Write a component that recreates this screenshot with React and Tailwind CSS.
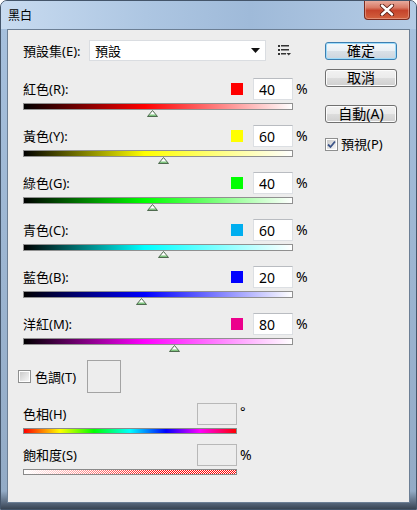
import React from 'react';

const channels = [
  { name: '紅色', key: 'R', value: 40, swatch: 'bg-[#ff0000]', bar: 'bg-[linear-gradient(to_right,#000,#f00_45%,#fff)]' },
  { name: '黃色', key: 'Y', value: 60, swatch: 'bg-[#ffff00]', bar: 'bg-[linear-gradient(to_right,#000,#ff0_45%,#fff)]' },
  { name: '綠色', key: 'G', value: 40, swatch: 'bg-[#00ff00]', bar: 'bg-[linear-gradient(to_right,#000,#0f0_45%,#fff)]' },
  { name: '青色', key: 'C', value: 60, swatch: 'bg-[#00aeef]', bar: 'bg-[linear-gradient(to_right,#000,#0ff_45%,#fff)]' },
  { name: '藍色', key: 'B', value: 20, swatch: 'bg-[#0000ff]', bar: 'bg-[linear-gradient(to_right,#000,#00f_45%,#fff)]' },
  { name: '洋紅', key: 'M', value: 80, swatch: 'bg-[#ec008c]', bar: 'bg-[linear-gradient(to_right,#000,#f0f_45%,#fff)]' },
];

function Thumb({ offset }) {
  return (
    <div className="h-[7px]">
      <svg width="11" height="7" viewBox="0 0 11 7" style={{ marginLeft: offset }} className="block">
        <defs>
          <linearGradient id="tg" x1="0" y1="0" x2="0" y2="1">
            <stop offset="0" stopColor="#ffffff" />
            <stop offset="0.5" stopColor="#ffffff" />
            <stop offset="1" stopColor="#3fa83f" />
          </linearGradient>
        </defs>
        <polygon points="5.5,0.5 10.5,6.5 0.5,6.5" fill="url(#tg)" stroke="#4f6a4f" strokeWidth="1" />
      </svg>
    </div>
  );
}

function ChannelRow({ c }) {
  // range is -200..300 across the 268px inner track
  const offset = 1 + ((c.value + 200) / 500) * 268 - 5.5;
  return (
    <div className="mb-[8px]">
      <div className="flex items-center h-[22px]">
        <span className="flex-1">
          {c.name}({c.key}):
        </span>
        <span className={`w-[12px] h-[12px] mr-[10px] ${c.swatch}`} />
        <input
          defaultValue={c.value}
          className="w-[40px] h-[22px] bg-white border border-[#dcdfe3] border-t-[#b9bcc1] pl-[5px] text-[14px] outline-none"
        />
        <span className="w-[20px] pl-[3px] text-[14px]">%</span>
      </div>
      <div className={`mt-[3px] w-[270px] h-[7px] border border-[#909090] ${c.bar}`} />
      <Thumb offset={offset} />
    </div>
  );
}

function Button({ children, primary }) {
  return (
    <button
      className={
        primary
          ? 'h-[18px] w-[72px] rounded-[3px] border border-[#3c7fb1] shadow-[inset_0_0_0_1px_#9fdcfb] bg-[linear-gradient(to_bottom,#f4f8fb,#e9eff4_50%,#d9e1e8_50%,#ccd5de)] text-[14px] leading-none text-black'
          : 'h-[18px] w-[72px] rounded-[3px] border border-[#707070] shadow-[inset_0_0_0_1px_#fcfcfc] bg-[linear-gradient(to_bottom,#f2f2f2,#ebebeb_50%,#dddddd_50%,#cfcfcf)] text-[14px] leading-none text-black'
      }
    >
      {children}
    </button>
  );
}

function CheckBox({ checked }) {
  return (
    <span className="w-[13px] h-[13px] border border-[#8e8f8f] bg-white p-[1px] flex">
      <span className="flex-1 bg-[linear-gradient(135deg,#cbcbcb,#f7f7f7)] flex items-center justify-center">
        {checked && (
          <svg width="9" height="9" viewBox="0 0 9 9">
            <path d="M1 4.5 L3.5 7 L8 1.5" fill="none" stroke="#3b5488" strokeWidth="1.8" />
          </svg>
        )}
      </span>
    </span>
  );
}

export default function App() {
  return (
    <div className="w-[417px] h-[510px] rounded-t-[7px] border border-[#44556a] flex flex-col overflow-hidden bg-[linear-gradient(to_bottom,#bdd2ea_0px,#a6c0dd_28px,#93abc6_490px,#56667a_502px,#2f3a46_510px)] font-['Noto_Sans','Noto_Sans_CJK_TC',sans-serif] text-[13px] leading-[16px] text-black">
      <div className="h-[28px] flex justify-between bg-[linear-gradient(to_right,#c8dbf0,#adc6e2_35%,#9fbad9_60%,#b4cbe5)]">
        <span className="self-center pl-[7px] pt-[2px] text-[12px]">黑白</span>
        <div className="mt-[-1px] mr-[6px] w-[46px] h-[20px] rounded-b-[4px] border border-[#7a2b1f] border-t-0 bg-[linear-gradient(to_bottom,#eab2a5,#d97a65_40%,#c5432b_55%,#d3623f)] shadow-[inset_0_0_0_1px_#f0b9ab80] flex items-center justify-center">
          <svg width="16" height="12" viewBox="0 0 16 12">
            <path d="M3 1.5 L13 10.5 M13 1.5 L3 10.5" stroke="#5a1d14" strokeWidth="4.2" strokeLinecap="round" />
            <path d="M3 1.5 L13 10.5 M13 1.5 L3 10.5" stroke="#ffffff" strokeWidth="2.4" strokeLinecap="round" />
          </svg>
        </div>
      </div>

      <div className="flex-1 mx-[6px] mb-[6px] border border-[#6c7f95] bg-[#ededed] flex">
        <div className="w-[305px] pl-[15px] pt-[10px]">
          <div className="flex items-center h-[21px]">
            <span className="w-[66px]">預設集(E):</span>
            <div className="w-[177px] h-[21px] bg-white border border-[#dadde1] flex items-center pl-[5px] pr-[5px]">
              <span className="flex-1">預設</span>
              <svg width="9" height="5" viewBox="0 0 9 5">
                <polygon points="0,0 9,0 4.5,5" fill="#111" />
              </svg>
            </div>
            <svg width="13" height="11" viewBox="0 0 13 11" className="ml-[12px]">
              <g fill="#333">
                <rect x="0" y="0" width="2" height="2" />
                <rect x="3" y="0" width="8" height="1.5" />
                <rect x="0" y="4" width="2" height="2" />
                <rect x="3" y="4" width="8" height="1.5" />
                <rect x="0" y="8" width="2" height="2" />
                <rect x="3" y="8" width="5" height="1.5" />
                <polygon points="8.5,8 13,8 10.75,10.5" />
              </g>
            </svg>
          </div>

          <div className="mt-[17px]">
            {channels.map((c) => (
              <ChannelRow key={c.key} c={c} />
            ))}
          </div>

          <div className="flex items-center h-[33px] mt-[1px]">
            <span className="ml-[-5px]">
              <CheckBox />
            </span>
            <span className="ml-[4px] w-[52px]">色調(T)</span>
            <div className="w-[34px] h-[33px] border border-[#a3a3a3]" />
          </div>

          <div className="mt-[10px] w-[230px]">
            <div className="flex items-center h-[22px]">
              <span className="flex-1">色相(H)</span>
              <div className="w-[40px] h-[22px] border border-[#b8b8b8]" />
              <span className="w-[16px] pl-[3px] self-start">°</span>
            </div>
            <div className="mt-[3px] w-[214px] h-[6px] border border-[#8a8a8a] bg-[linear-gradient(to_right,#f00,#ff0_17%,#0f0_33%,#0ff_50%,#00f_67%,#f0f_83%,#f00)]" />
          </div>

          <div className="mt-[10px] w-[230px]">
            <div className="flex items-center h-[22px]">
              <span className="flex-1">飽和度(S)</span>
              <div className="w-[40px] h-[22px] border border-[#b8b8b8]" />
              <span className="w-[16px] pl-[3px] text-[14px]">%</span>
            </div>
            <div className="mt-[3px] w-[214px] h-[6px] border border-[#8a8a8a] bg-[image:linear-gradient(to_right,#fff,#fff0_65%),repeating-conic-gradient(#f00_0%_25%,#fff_0%_50%)] bg-[length:100%_100%,2px_2px]" />
          </div>
        </div>

        <div className="ml-[12px] pt-[12px] flex flex-col">
          <Button primary>確定</Button>
          <div className="mt-[9px]">
            <Button>取消</Button>
          </div>
          <div className="mt-[18px]">
            <Button>自動(A)</Button>
          </div>
          <div className="mt-[13px] flex items-center">
            <CheckBox checked />
            <span className="ml-[3px]">預視(P)</span>
          </div>
        </div>
      </div>
    </div>
  );
}
